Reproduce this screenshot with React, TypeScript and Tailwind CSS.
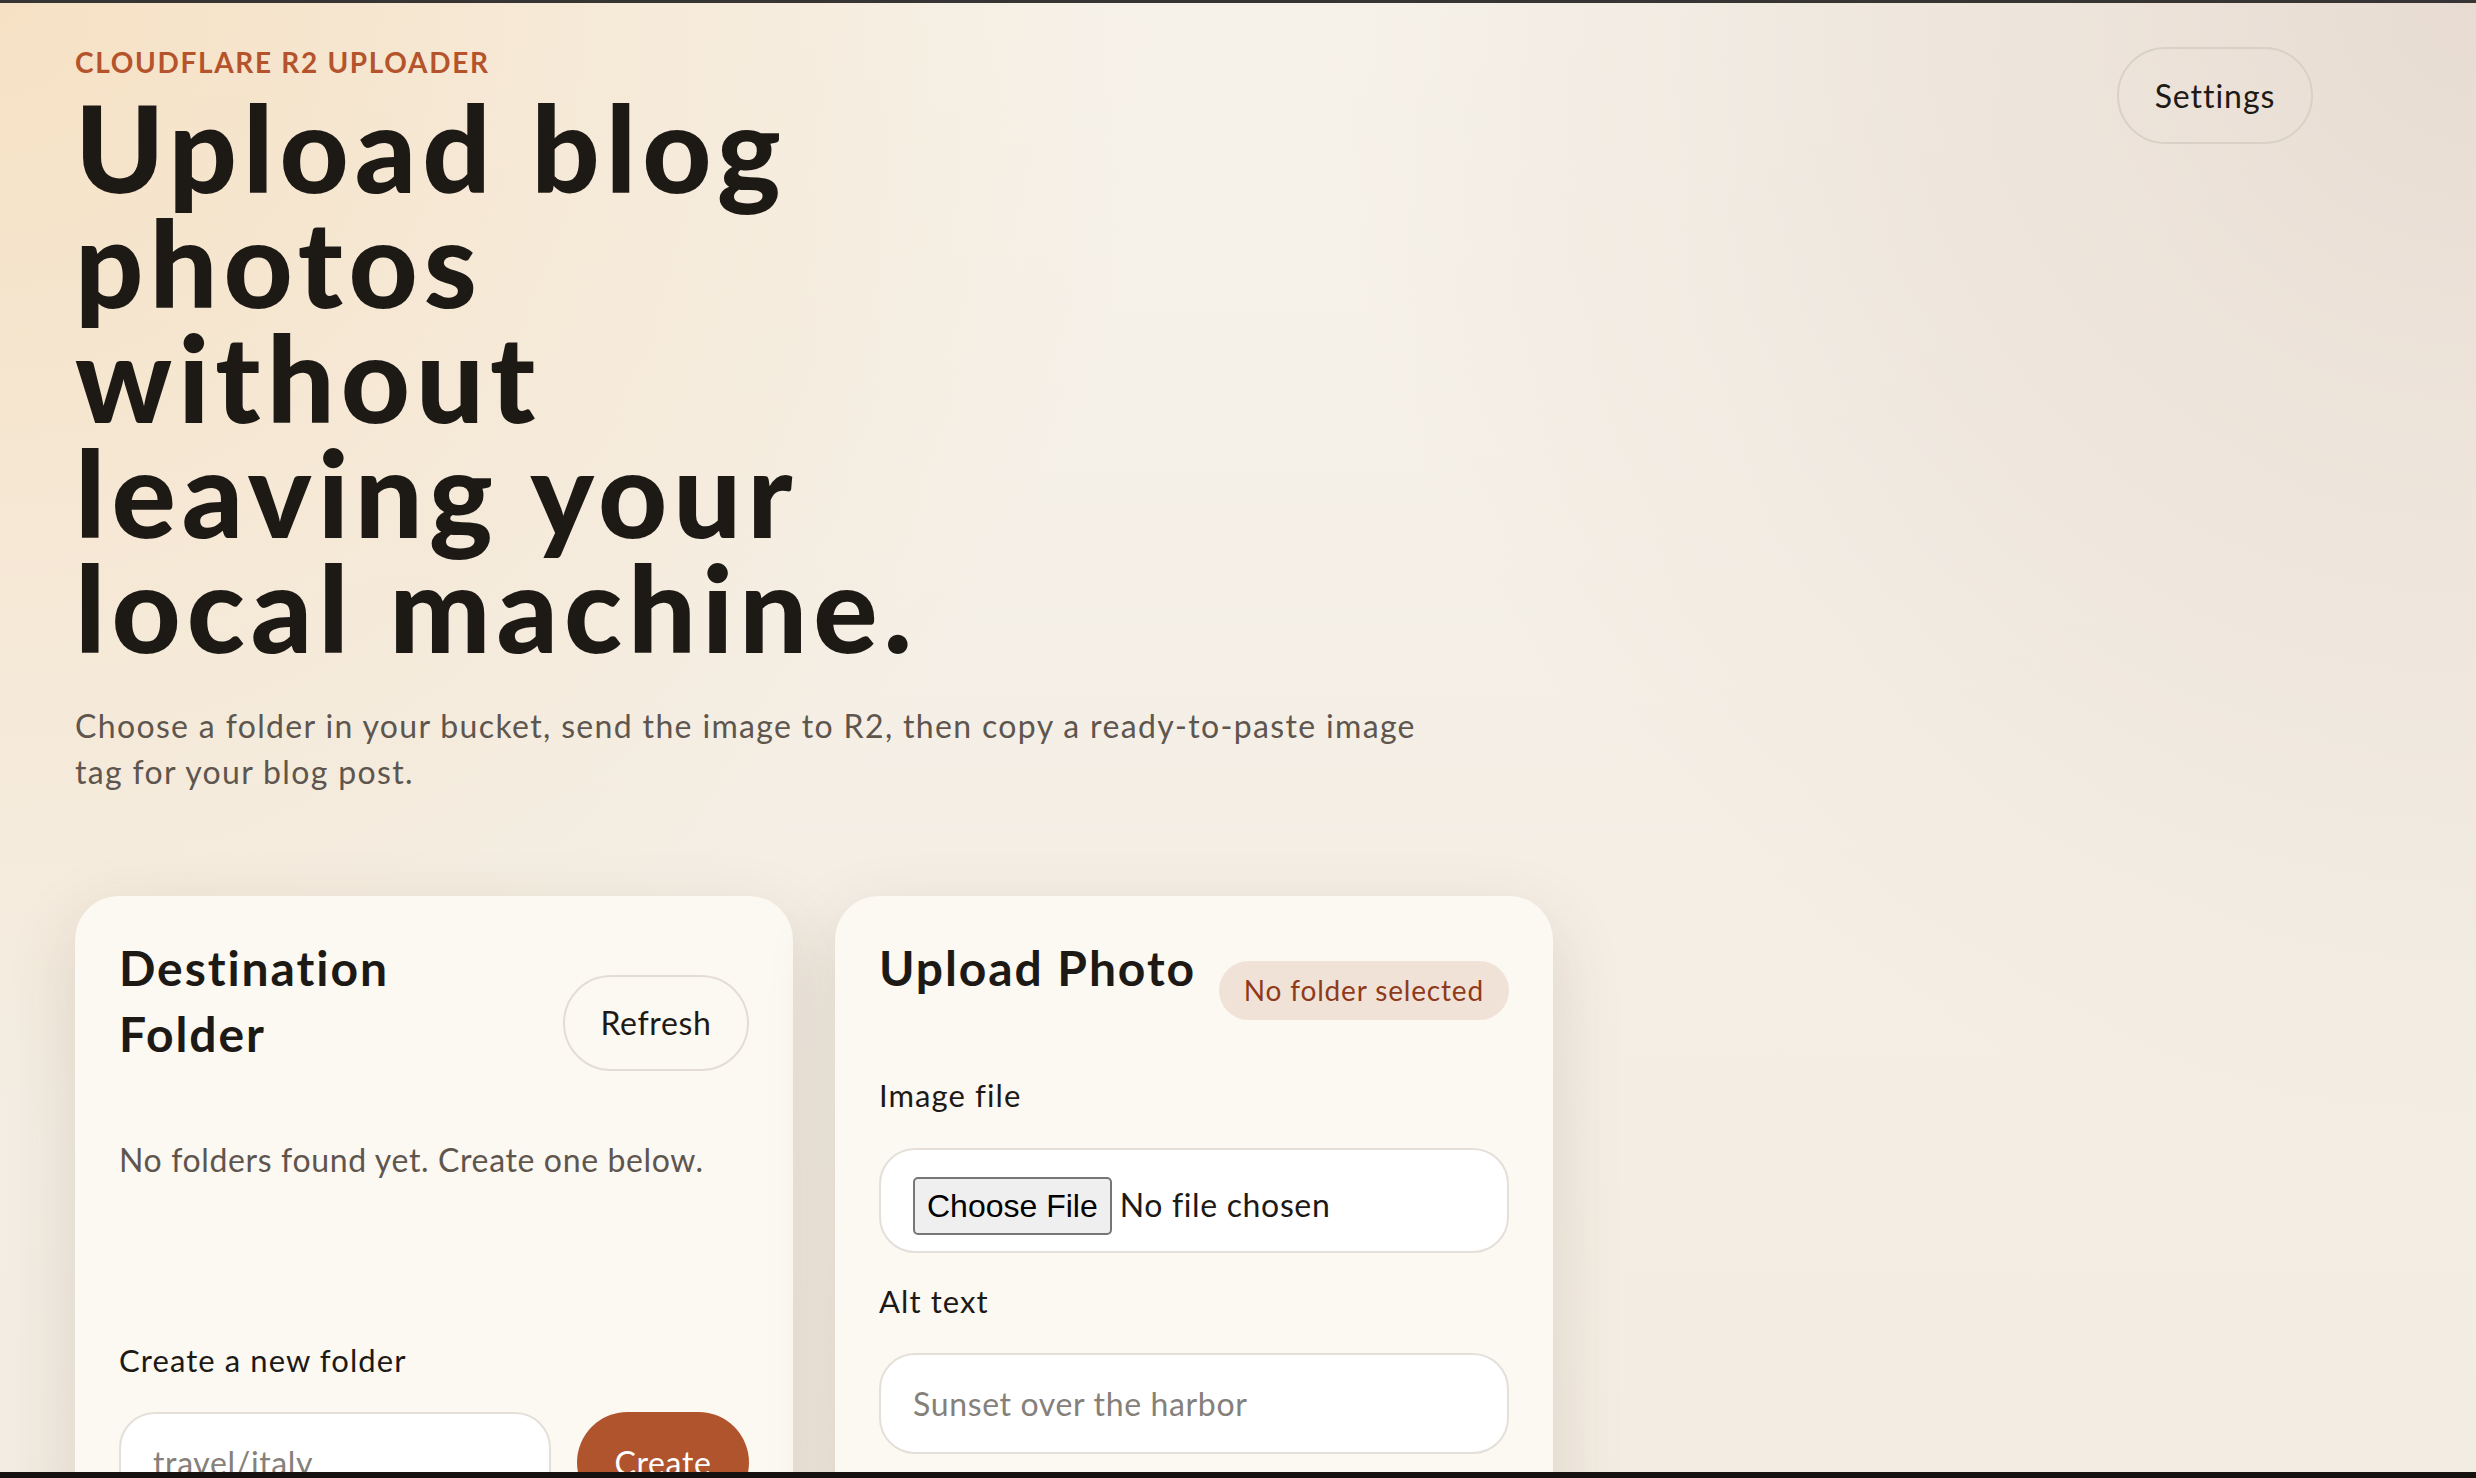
import React from 'react';

const fieldClass =
  "block w-full h-[101px] rounded-[36px] border-2 border-[#e4dfd8] bg-white px-[32px] text-[32px] tracking-[0.02em] text-[#1d1a16] outline-none placeholder:text-[#85807a]";

const labelClass = "block text-[31px] leading-[44px] tracking-[0.035em]";

function Card({ children }: { children: React.ReactNode }) {
  return (
    <div className="rounded-[44px] bg-[#fcf8f2] px-[44px] pt-[39px] pb-[44px] shadow-[0_24px_70px_rgba(90,62,34,0.15)]">
      {children}
    </div>
  );
}

export default function App() {
  return (
    <div className="h-[1478px] w-full overflow-hidden flex flex-col bg-[#14110e] font-['Lato','Noto_Sans',sans-serif] text-[#1d1a16]">
      <div className="h-[3px] shrink-0 bg-[#363533]" />

      <main className="flex-1 overflow-hidden pl-[75px] pt-[42px] bg-[radial-gradient(circle_at_0%_0%,rgba(246,224,194,0.95)_0%,rgba(246,224,194,0)_40%),radial-gradient(circle_at_100%_0%,rgba(232,220,210,1)_0%,rgba(232,220,210,0)_40%),linear-gradient(180deg,#f6f2ea_0%,#f3ece2_100%)]">
        <div className="w-[2238px]">
          <header className="flex items-start justify-between">
            <div>
              <p className="text-[28px] leading-[34px] font-bold uppercase tracking-[0.06em] text-[#b5532c]">
                Cloudflare R2 Uploader
              </p>
              <h1 className="mt-[11px] text-[120px] leading-[115px] font-black tracking-[0.05em]">
                Upload blog
                <br />
                photos
                <br />
                without
                <br />
                leaving your
                <br />
                local machine.
              </h1>
              <p className="mt-[38px] text-[32px] leading-[46px] tracking-[0.042em] text-[#5e564e]">
                Choose a folder in your bucket, send the image to R2, then copy a ready-to-paste image
                <br />
                tag for your blog post.
              </p>
            </div>
            <button className="mt-[2px] h-[97px] w-[196px] rounded-full border-2 border-[#d9d1c6] text-[32px] tracking-[0.03em]">
              Settings
            </button>
          </header>

          <section className="mt-[101px] grid grid-cols-3 gap-[42px]">
            <Card>
              <div className="flex items-start justify-between gap-[24px]">
                <h2 className="text-[48px] leading-[66px] font-bold tracking-[0.04em]">
                  Destination
                  <br />
                  Folder
                </h2>
                <button className="mt-[40px] h-[96px] w-[186px] shrink-0 rounded-full border-2 border-[#e3ddd4] text-[32px] tracking-[0.02em]">
                  Refresh
                </button>
              </div>

              <p className="mt-[66px] text-[32px] leading-[46px] tracking-[0.02em] text-[#5e564e]">
                No folders found yet. Create one below.
              </p>

              <label className={labelClass + " mt-[155px]"}>Create a new folder</label>
              <div className="mt-[30px] flex gap-[26px]">
                <input placeholder="travel/italy" className={fieldClass + " !w-[432px]"} />
                <button className="h-[101px] w-[172px] shrink-0 rounded-full bg-[#b0542d] text-[32px] tracking-[0.02em] text-white">
                  Create
                </button>
              </div>
            </Card>

            <Card>
              <div className="flex h-[66px] items-start justify-between gap-[20px]">
                <h2 className="whitespace-nowrap text-[48px] leading-[66px] font-bold tracking-[0.04em]">Upload Photo</h2>
                <span className="mt-[26px] h-[59px] shrink-0 whitespace-nowrap rounded-full bg-[#f1e2d8] px-[25px] text-[28px] leading-[59px] tracking-[0.03em] text-[#8f3a1a]">
                  No folder selected
                </span>
              </div>

              <label className={labelClass + " mt-[72px]"}>Image file</label>
              <input
                type="file"
                className="mt-[31px] block w-full h-[105px] rounded-[36px] border-2 border-[#e4dfd8] bg-white px-[32px] py-[27px] text-[32px] tracking-[0.02em] text-[#1d1a16] file:mr-[8px] file:rounded-[5px] file:border-2 file:border-[#767676] file:bg-[#efefef] file:px-[12px] file:py-[3px] file:font-['Liberation_Sans',Arial,sans-serif] file:text-[32px] file:tracking-normal file:text-black"
              />

              <label className={labelClass + " mt-[26px]"}>Alt text</label>
              <input placeholder="Sunset over the harbor" className={fieldClass + " mt-[30px]"} />
            </Card>
          </section>
        </div>
      </main>

      <div className="h-[6px] shrink-0 bg-[#14110e]" />
    </div>
  );
}
